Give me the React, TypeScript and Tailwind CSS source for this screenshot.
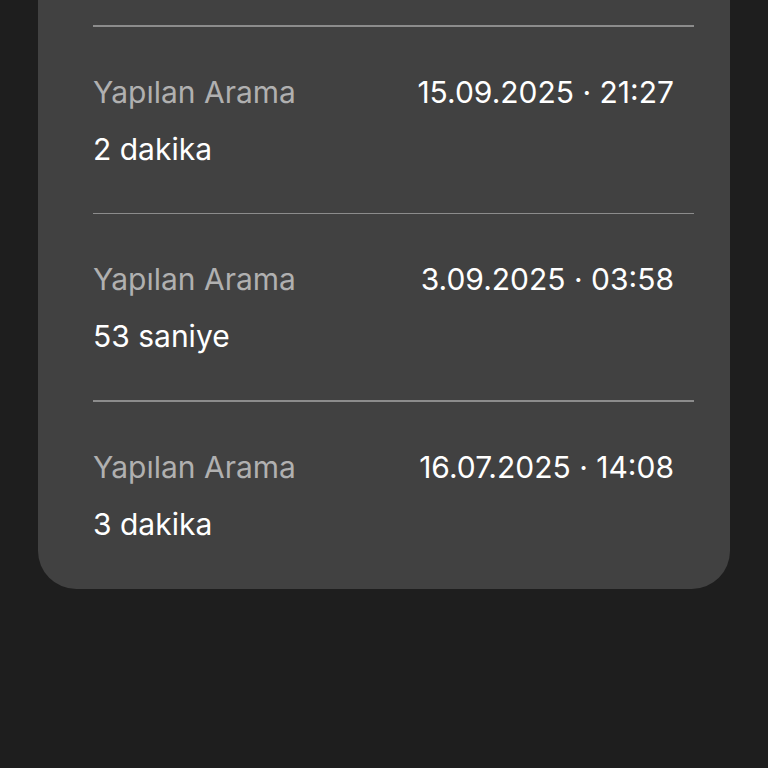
import React from 'react';

const calls = [
  { date: '15.09.2025 · 21:27', duration: '2 dakika' },
  { date: '3.09.2025 · 03:58', duration: '53 saniye' },
  { date: '16.07.2025 · 14:08', duration: '3 dakika' },
];

const App: React.FC = () => {
  return (
    <div
      className="w-full min-h-[768px] bg-[#1e1e1e] px-[38px]"
      style={{ fontFamily: 'Inter, "Noto Sans", sans-serif' }}
    >
      <div className="bg-[#414141] rounded-b-[38px] pt-[25px] pb-[2px]">
        {calls.map((call, idx) => (
          <div key={idx} className="pl-[55px] pr-[36px]">
            <div className="h-[1.5px] bg-[#8c8c8c]" />
            <div className={`pr-[20px] pt-[45px] ${idx === calls.length - 1 ? 'pb-[43px]' : 'pb-[44px]'}`}>
              <div className="flex items-center justify-between text-[30px] leading-[40px]">
                <span className="text-[#b0b0b0]">Yapılan Arama</span>
                <span className="text-white">{call.date}</span>
              </div>
              <div className="mt-[17px] text-[30px] leading-[40px] text-white">
                {call.duration}
              </div>
            </div>
          </div>
        ))}
      </div>
    </div>
  );
};

export default App;
